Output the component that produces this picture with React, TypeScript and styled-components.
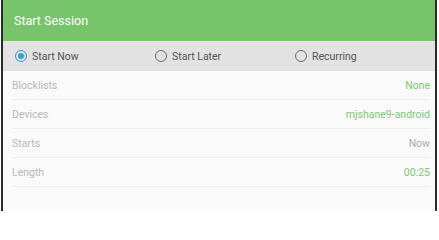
import React from "react";
import styled, { createGlobalStyle } from "styled-components";

const Global = createGlobalStyle`
  html, body { margin: 0; padding: 0; background: #ffffff; }
  body { font-family: Roboto, "Noto Sans", sans-serif; }
`;

const Frame = styled.div`
  margin-left: 1px;
  width: 436px;
  height: 211px;
  box-sizing: border-box;
  border-left: 2px solid #2a2a2a;
  border-right: 2px solid #2a2a2a;
  background: #fafafa;
  display: flex;
  flex-direction: column;
  overflow: hidden;
`;

const Header = styled.div`
  height: 41px;
  background: #77c46a;
  display: flex;
  align-items: center;
  padding-left: 11px;
  color: #ffffff;
  font-size: 12.5px;
`;

const Tabs = styled.div`
  height: 30px;
  background: #e2e2e2;
  display: grid;
  grid-template-columns: 140px 140px 1fr;
  align-items: center;
  padding-left: 12px;
`;

const Option = styled.div`
  display: flex;
  align-items: center;
  gap: 5px;
  font-size: 10.5px;
  color: #555;
`;

const Radio = styled.span<{ $on?: boolean }>`
  width: 10px;
  height: 10px;
  border-radius: 50%;
  border: 1.5px solid ${(p) => (p.$on ? "#2f9fd8" : "#6a6a6a")};
  display: flex;
  align-items: center;
  justify-content: center;
  &::after {
    content: "";
    width: 6px;
    height: 6px;
    border-radius: 50%;
    background: ${(p) => (p.$on ? "#2f9fd8" : "transparent")};
  }
`;

const List = styled.div`
  display: flex;
  flex-direction: column;
  padding: 0 5px 0 9px;
`;

const Row = styled.div`
  height: 29px;
  display: flex;
  align-items: center;
  justify-content: space-between;
  border-bottom: 1px solid #efefef;
  box-sizing: border-box;
  font-size: 10.5px;
`;

const Label = styled.span`
  color: #b9b9b9;
`;

const Value = styled.span<{ $green?: boolean }>`
  color: ${(p) => (p.$green ? "#7cc873" : "#ababab")};
`;

const rows = [
  { label: "Blocklists", value: "None", green: true },
  { label: "Devices", value: "mjshane9-android", green: true },
  { label: "Starts", value: "Now", green: false },
  { label: "Length", value: "00:25", green: true },
];

export default function App() {
  return (
    <>
      <Global />
      <Frame>
        <Header>Start Session</Header>
        <Tabs>
          <Option>
            <Radio $on />
            Start Now
          </Option>
          <Option>
            <Radio />
            Start Later
          </Option>
          <Option>
            <Radio />
            Recurring
          </Option>
        </Tabs>
        <List>
          {rows.map((r) => (
            <Row key={r.label}>
              <Label>{r.label}</Label>
              <Value $green={r.green}>{r.value}</Value>
            </Row>
          ))}
        </List>
      </Frame>
    </>
  );
}
